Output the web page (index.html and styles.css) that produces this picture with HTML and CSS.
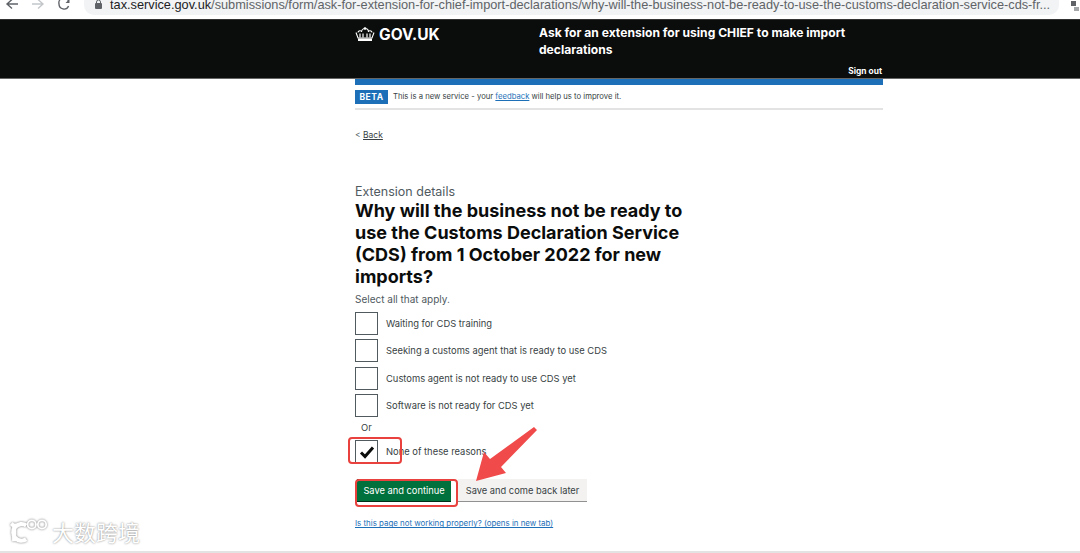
FILE: index.html
```html
<!DOCTYPE html>
<html lang="en">
<head>
  <meta charset="UTF-8">
  <meta name="viewport" content="width=device-width, initial-scale=1.0">
  <title>Ask for an extension for using CHIEF to make import declarations</title>
  <link rel="stylesheet" href="styles.css">
</head>
<body>
  <!-- Browser toolbar -->
  <div class="toolbar">
    <svg class="nav-icon" width="14" height="12" viewBox="0 0 14 12"><path d="M13 5H3M7 0.5 2 5l5 4.5" fill="none" stroke="#5f6368" stroke-width="1.4"/></svg>
    <svg class="nav-icon" width="14" height="12" viewBox="0 0 14 12"><path d="M1 5h10M7 0.5 12 5l-5 4.5" fill="none" stroke="#c4c7ca" stroke-width="1.4"/></svg>
    <svg class="nav-icon" width="14" height="12" viewBox="0 0 14 12"><path d="M11.5 2A5 5 0 0 0 2 5a5 5 0 0 0 9.6 2" fill="none" stroke="#5f6368" stroke-width="1.4"/><path d="M12.5 0v4h-4z" fill="#5f6368"/></svg>
    <div class="address">
      <svg class="lock" width="7" height="9" viewBox="0 0 7 9"><rect x="0" y="3" width="7" height="6" rx="1" fill="#5f6368"/><path d="M1.5 3.5V2a2 2 0 0 1 4 0v1.5" fill="none" stroke="#5f6368"/></svg>
      <span class="url"><b>tax.service.gov.uk</b>/submissions/form/ask-for-extension-for-chief-import-declarations/why-will-the-business-not-be-ready-to-use-the-customs-declaration-service-cds-fr...</span>
    </div>
    <svg class="nav-icon share-icon" width="8" height="10" viewBox="0 0 8 10"><path d="M0 0h5v5H0z" fill="#5f6368"/><path d="M3 6h5v4H3z" fill="#a4a7aa"/></svg>
  </div>

  <!-- Header -->
  <header class="site-header">
    <div class="header-inner">
      <a class="logo" href="#">
        <svg width="20" height="15" viewBox="0 0 20 15"><path d="M10 0v3M8.800 1.200h2.400M3 5.500a2 2 0 0 1 3-1.500M17 5.500a2 2 0 0 0-3-1.500M6.500 5a3.500 3.500 0 0 1 7 0M1 5.500 3 11h14l2-5.500" fill="none" stroke="#fff" stroke-width="1.100"/><path d="M3 11.500h14V14H3z" fill="#fff"/><path d="M5 6.500v4M8 6.500v4M12 6.500v4M15 6.500v4" stroke="#fff" stroke-width="1.200"/></svg>
        GOV.UK
      </a>
      <div class="service-name">Ask for an extension for using CHIEF to make import declarations</div>
      <a class="sign-out" href="#">Sign out</a>
    </div>
  </header>

  <main class="page">
    <div class="beta-bar">
      <span class="beta-tag">BETA</span>
      <span>This is a new service - your <a href="#">feedback</a> will help us to improve it.</span>
    </div>

    <a class="back" href="#"><span class="chevron">&lt;</span> <u>Back</u></a>

    <div class="caption">Extension details</div>
    <h1>Why will the business not be ready to use the Customs Declaration Service (CDS) from 1 October 2022 for new imports?</h1>
    <div class="hint">Select all that apply.</div>

    <div class="choices">
      <div class="choice"><span class="box"></span>Waiting for CDS training</div>
      <div class="choice"><span class="box"></span>Seeking a customs agent that is ready to use CDS</div>
      <div class="choice"><span class="box"></span>Customs agent is not ready to use CDS yet</div>
      <div class="choice"><span class="box"></span>Software is not ready for CDS yet</div>
      <div class="or">Or</div>
      <div class="choice">
        <span class="box">
          <svg width="16" height="14" viewBox="0 0 16 14"><path d="M2 7.500 6 11.500 14 2.500" fill="none" stroke="#0b0c0c" stroke-width="3"/></svg>
        </span>None of these reasons
        <span class="mark mark-check"></span>
      </div>
    </div>

    <div class="buttons">
      <button class="btn btn-primary" type="button">Save and continue</button>
      <button class="btn btn-secondary" type="button">Save and come back later</button>
      <span class="mark mark-save"></span>
      <svg class="arrow" width="62" height="56" viewBox="0 0 62 56"><path d="M58 1 61 4 25 41 30 47 0 55 8 26 14 33Z" fill="#f04a4a"/></svg>
    </div>

    <a class="report" href="#">Is this page not working properly? (opens in new tab)</a>
  </main>

  <div class="watermark">
    <svg width="40" height="26" viewBox="6 0 42 28"><path d="M11 6 11 25M8 9l3-3M24 8a9 9 0 1 0 0 15" fill="none" stroke="#fff" stroke-width="4.500"/><circle cx="30" cy="7" r="4.500" fill="none" stroke="#fff" stroke-width="2"/><circle cx="41" cy="7" r="4.500" fill="none" stroke="#fff" stroke-width="2"/></svg>
    <span>大数跨境</span>
  </div>
  <div class="bottom-line"></div>
</body>
</html>
```

FILE: styles.css
```css
* {
  box-sizing: border-box;
}

html, body {
  height: 553px;
  overflow: hidden;
}

body {
  margin: 0;
  background-color: #fff;
  color: #0b0c0c;
  font-family: "Inter", "Liberation Sans", sans-serif;
  position: relative;
}

a {
  color: #1d70b8;
}

.toolbar {
  height: 19px;
  background-color: #fff;
  display: flex;
  align-items: center;
  overflow: hidden;
  padding-left: 5px;
  padding-right: 1px;
  gap: 12px;
}

.nav-icon {
  flex: none;
  margin-top: -10px;
}

.address {
  flex: 1;
  height: 18px;
  margin-top: -8px;
  padding-left: 11px;
  padding-bottom: 3px;
  background-color: #f1f3f4;
  border-radius: 0 0 10px 10px;
  display: flex;
  align-items: center;
  gap: 8px;
  margin-left: 1px;
  min-width: 0;
  overflow: hidden;
}

.lock {
  flex: none;
}

.url {
  font-family: "Liberation Sans", sans-serif;
  font-size: 12.750px;
  color: #5f6368;
  white-space: nowrap;
}

.url b {
  font-weight: normal;
  color: #202124;
}

.share-icon {
  margin-top: -8px;
}

.site-header {
  height: 60px;
  background-color: #0b0c0c;
  border-top: 1px solid #333;
  border-bottom: 1px solid #666;
}

.header-inner {
  width: 528px;
  height: 100%;
  margin-left: 355px;
  display: grid;
  grid-template-columns: 184px 1fr;
  position: relative;
}

.logo {
  color: #fff;
  font-size: 15.500px;
  font-weight: 700;
  text-decoration: none;
  display: flex;
  align-items: flex-start;
  gap: 4px;
  padding-top: 5px;
}

.logo svg {
  margin-top: 2px;
}

.service-name {
  color: #fff;
  font-size: 12.100px;
  font-weight: 700;
  line-height: 16.500px;
  padding-top: 5px;
  width: 320px;
}

.sign-out {
  color: #fff;
  font-size: 8.400px;
  font-weight: 700;
  text-decoration: none;
  position: absolute;
  right: 1px;
  bottom: 2px;
}

.page {
  width: 528px;
  margin-left: 355px;
}

.beta-bar {
  height: 31px;
  border-top: 6px solid #1d70b8;
  border-bottom: 2px solid #e3e3e3;
  display: flex;
  align-items: center;
  gap: 5px;
  font-size: 7.700px;
  color: #383f43;
}

.beta-tag {
  background-color: #1d70b8;
  color: #fff;
  font-size: 8.500px;
  font-weight: 700;
  letter-spacing: 0.5px;
  width: 33px;
  height: 14px;
  line-height: 14px;
  text-align: center;
}

.back {
  display: block;
  margin-top: 20px;
  font-size: 8.500px;
  color: #383f43;
  text-decoration: none;
}

.chevron {
  color: #505a5f;
}

.caption {
  margin-top: 44px;
  font-size: 12.500px;
  color: #505a5f;
}

h1 {
  margin: 1px 0 0;
  width: 335px;
  font-size: 18px;
  line-height: 22px;
  font-weight: 700;
}

.hint {
  margin-top: 5px;
  font-size: 10px;
  color: #505a5f;
}

.choices {
  margin-top: 5px;
}

.choice {
  height: 27.300px;
  display: flex;
  align-items: center;
  gap: 8px;
  font-size: 9.400px;
  color: #383f43;
  position: relative;
}

.box {
  width: 23px;
  height: 23px;
  flex: none;
  border: 1px solid #505a5f;
  display: flex;
  align-items: center;
  justify-content: center;
}

.or {
  font-size: 9.400px;
  color: #383f43;
  margin: 3px 0 0 6px;
  height: 16px;
}

.mark {
  position: absolute;
  border: 2.500px solid #e8413e;
  border-radius: 4px;
}

.mark-check {
  left: -7px;
  top: -1px;
  width: 54px;
  height: 27px;
}

.buttons {
  margin-top: 14px;
  display: flex;
  position: relative;
}

.btn {
  height: 22px;
  border: 0;
  padding: 0;
  font-family: inherit;
  font-size: 9.300px;
}

.btn-primary {
  width: 94px;
  margin-left: 2px;
  background-color: #00703c;
  color: #fff;
  box-shadow: 0 1px 0 #002d18;
}

.btn-secondary {
  width: 129px;
  margin-left: 7px;
  background-color: #f3f2f1;
  color: #383f43;
  box-shadow: 0 1px 0 #929191;
}

.mark-save {
  left: 0;
  top: 0;
  width: 103px;
  height: 28px;
}

.arrow {
  position: absolute;
  left: 121px;
  top: -53px;
}

.report {
  display: block;
  margin-top: 17px;
  font-size: 7.900px;
}

.watermark {
  position: absolute;
  left: 9px;
  top: 515px;
  display: flex;
  align-items: center;
  gap: 3px;
  color: #fff;
  font-family: "Noto Sans CJK SC", sans-serif;
  font-size: 22px;
  text-shadow: 0 0 2px #777;
}

.watermark svg {
  filter: drop-shadow(0 0 1px #777);
}

.bottom-line {
  position: absolute;
  left: 0;
  right: 0;
  bottom: 0;
  height: 2px;
  background-color: #e3e3e3;
}
```
